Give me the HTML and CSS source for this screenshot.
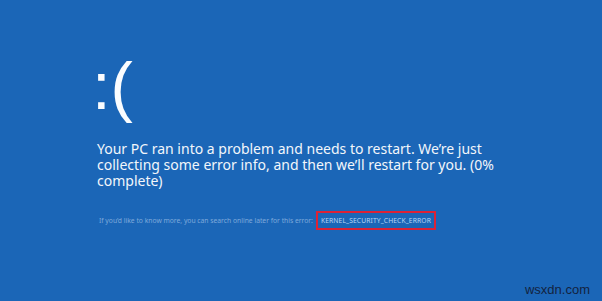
FILE: index.html
```html
<!DOCTYPE html>
<html>
<head>
<meta charset="utf-8">
<link rel="stylesheet" href="styles.css">
</head>
<body>
<div class="screen">
  <div class="face">:(</div>
  <p class="message">Your PC ran into a problem and needs to restart. We’re just<br>collecting some error info, and then we’ll restart for you. (0%<br>complete)</p>
  <div class="info">
    <span class="hint">If you’d like to know more, you can search online later for this error:</span>
    <span class="code">KERNEL_SECURITY_CHECK_ERROR</span>
  </div>
  <div class="footer"><span class="mark">wsxdn.com</span></div>
</div>
</body>
</html>
```
FILE: styles.css
```css
html, body {
  margin: 0;
  padding: 0;
}
body {
  width: 602px;
  height: 301px;
  overflow: hidden;
  background: #1b66b7;
  font-family: "Noto Sans", "Open Sans", sans-serif;
  color: #fff;
}
.screen {
  display: flex;
  flex-direction: column;
  height: 301px;
  padding-left: 97px;
  box-sizing: border-box;
}
.face {
  margin-top: 51px;
  margin-left: -5px;
  font-family: "Liberation Sans", sans-serif;
  font-size: 67px;
  line-height: 70px;
  height: 70px;
  color: #fbfdff;
}
.message {
  margin: 20px 0 0;
  font-size: 14px;
  line-height: 16px;
  color: #f2f6fb;
}
.info {
  margin-top: 22px;
  display: flex;
  align-items: center;
  gap: 3px;
  padding-left: 2px;
  font-size: 6.75px;
}
.hint {
  color: #7faadb;
}
.code {
  color: #b8d6f6;
  border: 2px solid #dc2236;
  padding: 3px 3px;
  letter-spacing: 0.1px;
}
.footer {
  margin-top: auto;
  margin-bottom: 4px;
  display: flex;
  justify-content: flex-end;
  padding-right: 12px;
}
.mark {
  font-family: "Liberation Sans", sans-serif;
  font-size: 13px;
  color: #13233f;
}
```
